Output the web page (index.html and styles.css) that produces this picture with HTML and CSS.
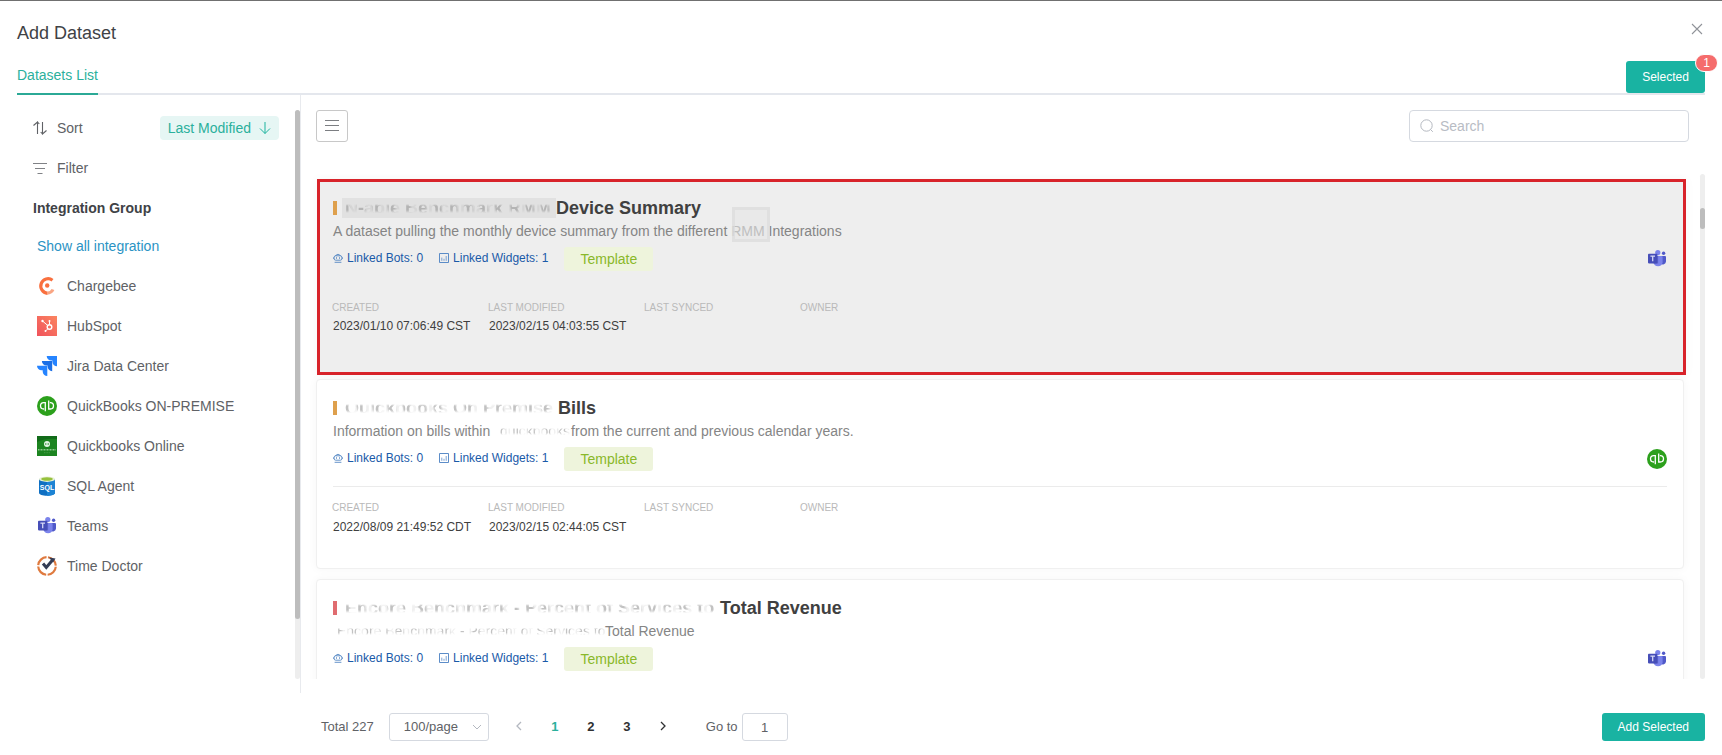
FILE: index.html
```html
<!DOCTYPE html>
<html lang="en">
<head>
<meta charset="utf-8">
<title>Add Dataset</title>
<link rel="stylesheet" href="styles.css">
</head>
<body>
<svg class="sprite" aria-hidden="true">
  <symbol id="teams" viewBox="0 0 20 20">
    <circle cx="16.6" cy="4.3" r="1.7" fill="#5059c9"/>
    <path d="M13.6 7H18a1 1 0 0 1 1 1v4.6a3.2 3.2 0 0 1-5.4 2z" fill="#5059c9"/>
    <circle cx="10.8" cy="3.6" r="2.6" fill="#7b83eb"/>
    <path d="M6.5 7h8.2a.9.9 0 0 1 .9.9v5.4a4.6 4.6 0 0 1-9.1 0z" fill="#7b83eb"/>
    <path d="M6.5 7h4.6v7.6H6.7z" fill="#4f55b5" opacity=".6"/>
    <rect x="1" y="4.8" width="9.4" height="9.6" rx=".8" fill="#464eb8"/>
    <path d="M3.4 7.2H8M5.7 7.2v5" stroke="#d5d7f5" stroke-width="1.3" fill="none"/>
  </symbol>
  <symbol id="qb" viewBox="0 0 20 20">
    <circle cx="10" cy="10" r="10" fill="#2ca01c"/>
    <path d="M8.300 6.600H6.700a3.100 3.100 0 0 0 0 6.400h.4M8.300 5.900v9.300M11.700 13h1.600a3.100 3.100 0 0 0 0-6.400h-.4M11.700 13.700V4.600" stroke="#fff" stroke-width="1.300" fill="none"/>
  </symbol>
  <symbol id="bot" viewBox="0 0 10 10">
    <path d="M2.400 2.600Q5 -.2 7.600 2.600M2.600 2.800h4.800q1.400 0 1.400 1.400v1.600q0 1.400-1.400 1.400H2.600q-1.400 0-1.400-1.400V4.200q0-1.400 1.400-1.400zM.4 4.400v1.400M9.600 4.400v1.400M1.600 9.300h6.800" fill="none" stroke="#3f78bd" stroke-width=".8"/>
    <path d="M3 5h1M6 5h1" stroke="#1a5aa8" stroke-width="1"/>
  </symbol>
  <symbol id="widget" viewBox="0 0 10 10">
    <path d="M.5.5h9v9h-9z" fill="none" stroke="#4a80c2" stroke-width=".9"/>
    <path d="M2.800 4.600v3.200M5 5.800v2M7.200 3v4.800" stroke="#6c97cd" stroke-width=".9"/>
  </symbol>
</svg>

<div class="modal">
  <header class="header">
    <h1 class="header-title">Add Dataset</h1>
    <button class="close" aria-label="Close"><svg viewBox="0 0 12 12" width="12" height="12"><path d="M1 1l10 10M11 1L1 11" stroke="#909399" stroke-width="1.1"/></svg></button>
  </header>

  <nav class="tabs">
    <a class="tab" href="#list">Datasets List</a>
    <button class="btn btn-selected">Selected<span class="badge">1</span></button>
  </nav>

  <div class="body">
    <aside class="sidebar">
      <div class="side-content">
        <div class="side-row">
          <svg viewBox="0 0 14 14" width="14" height="14"><path d="M.5 4.500L4.500 1v12M4.500 1l1.800 2M13.500 9.500L9.500 13V1M9.500 13L7.700 11" fill="none" stroke="#606266" stroke-width="1.100"/></svg>
          <span>Sort</span>
          <button class="sort-pill">Last Modified<svg viewBox="0 0 12 14" width="12" height="14"><path d="M6 1v11.500M1 7.500l5 5 5-5" fill="none" stroke="#1db39e"/></svg></button>
        </div>
        <div class="side-row">
          <svg viewBox="0 0 14 14" width="14" height="14"><path d="M0 2.500h14M2 7.500h10M4.500 12.500h5" fill="none" stroke="#808286" stroke-width="1.200"/></svg>
          <span>Filter</span>
        </div>
        <h2 class="side-heading">Integration Group</h2>
        <a class="side-link" href="#all">Show all integration</a>
        <ul class="integrations">
          <li><svg viewBox="0 0 20 20" width="20" height="20"><path d="M15.500 4.200A7.300 7.300 0 1 0 10.500 17.300" fill="none" stroke="#f9703f" stroke-width="3.200"/><path d="M10 17.200Q14.500 17 16 13.500" fill="none" stroke="#f9a583" stroke-width="3"/><circle cx="10.200" cy="9.500" r="2.200" fill="#f9703f"/></svg>Chargebee</li>
          <li><svg viewBox="0 0 20 20" width="20" height="20"><defs><linearGradient id="hs" x1="0" y1="1" x2="1" y2="0"><stop offset="0" stop-color="#f0525c"/><stop offset="1" stop-color="#fb8560"/></linearGradient></defs><path d="M0 0h20v20H0z" fill="url(#hs)"/><circle cx="12.500" cy="11" r="2.300" fill="none" stroke="#fff" stroke-width="1.400"/><path d="M5.500 5l5.300 4.500M12.500 8.500V5.500M10.800 12.800l-2 2" stroke="#fff"/><g fill="#fff"><circle cx="5.500" cy="5" r="1.200"/><circle cx="12.500" cy="5" r="1"/><circle cx="8.500" cy="15" r="1"/></g></svg>HubSpot</li>
          <li><svg viewBox="0 0 20 20" width="20" height="20"><path d="M9.700 0H20v10.300a4.600 4.600 0 0 1-4.600-4.600V4.600h-1.100A4.600 4.600 0 0 1 9.700 0z" fill="#2684ff"/><path d="M4.900 4.900h10.300v10.300a4.600 4.600 0 0 1-4.600-4.600V9.500H9.500a4.600 4.600 0 0 1-4.600-4.600z" fill="#1b6fe6"/><path d="M0 9.700h10.300V20a4.600 4.600 0 0 1-4.600-4.600v-1.100H4.600A4.600 4.600 0 0 1 0 9.700z" fill="#2684ff"/></svg>Jira Data Center</li>
          <li><svg width="20" height="20"><use href="#qb"/></svg>QuickBooks ON-PREMISE</li>
          <li><svg viewBox="0 0 20 20" width="20" height="20"><path d="M0 0h20v20H0z" fill="#1c8420"/><path d="M0 0h20v3Q9 2 0 6z" fill="#126b19"/><circle cx="10" cy="8" r="3" fill="#e3f3e3"/><path d="M8.800 7v2M11.200 7v2" stroke="#1c8420" stroke-width=".8"/><path d="M1 13.800h18" stroke="#8cc78c" stroke-width="1.600" stroke-dasharray="1 .5"/><path d="M7 16.700h6" stroke="#4ea052" stroke-width=".8" stroke-dasharray="1 .6"/></svg>Quickbooks Online</li>
          <li><svg viewBox="0 0 20 20" width="20" height="20"><path d="M2 3v14c0 1.500 3.500 2.700 8 2.700s8-1.200 8-2.700V3z" fill="#0f6fc2"/><path d="M10 3h8v14c0 1.500-3.500 2.700-8 2.700z" fill="#1c83d4"/><ellipse cx="10" cy="3.200" rx="8" ry="2.700" fill="#e9f1d5"/><ellipse cx="10" cy="3" rx="5.800" ry="1.800" fill="#96c13d"/><text class="sql-text" x="10" y="14" text-anchor="middle">SQL</text></svg>SQL Agent</li>
          <li><svg width="20" height="20"><use href="#teams"/></svg>Teams</li>
          <li><svg viewBox="0 0 20 20" width="20" height="20"><circle cx="10" cy="10" r="8.800" fill="none" stroke="#df7a3f" stroke-width="2.200" stroke-dasharray="12.320 1.500" stroke-dashoffset="-.75"/><path d="M6 7.500l3.300 4L16 3.500" fill="none" stroke="#343d55" stroke-width="3"/><path d="M12 1.500l6.500 1-2.500 4z" fill="#343d55"/></svg>Time Doctor</li>
        </ul>
      </div>
      <div class="track"><div class="thumb side-thumb"></div></div>
    </aside>

    <main class="main" id="list">
      <div class="toolbar">
        <button class="menu-btn" aria-label="Menu"><svg viewBox="0 0 14 14" width="14" height="14"><path d="M0 1.500h14M0 6.500h14M0 11.500h14" stroke="#7c7e82" stroke-width="1.200"/></svg></button>
        <label class="search">
          <svg viewBox="0 0 14 14" width="14" height="14"><circle cx="6.500" cy="6.500" r="5.700" fill="none" stroke="#b4b8c0"/><path d="M10.500 10.500l2.300 2.300" stroke="#b4b8c0"/></svg>
          <input type="search" placeholder="Search" aria-label="Search">
        </label>
      </div>

      <div class="scroller">
        <div class="list">
          <article class="card card-active">
            <h3 class="card-title"><i class="mark"></i><span class="redacted redacted-block"><span class="smudge">N-able Benchmark RMM</span></span>Device Summary</h3>
            <p class="card-desc">A dataset pulling the monthly device summary from the different <span class="patched">RMM</span> Integrations</p>
            <div class="card-links">
              <a class="link" href="#bots"><svg width="10" height="10"><use href="#bot"/></svg>Linked Bots: 0</a>
              <a class="link" href="#widgets"><svg width="10" height="10"><use href="#widget"/></svg>Linked Widgets: 1</a>
              <span class="tag">Template</span>
              <svg class="source" width="20" height="20"><use href="#teams"/></svg>
            </div>
            <dl class="meta">
              <div><dt>CREATED</dt><dd>2023/01/10 07:06:49 CST</dd></div>
              <div><dt>LAST MODIFIED</dt><dd>2023/02/15 04:03:55 CST</dd></div>
              <div><dt>LAST SYNCED</dt><dd></dd></div>
              <div><dt>OWNER</dt><dd></dd></div>
            </dl>
          </article>

          <article class="card">
            <h3 class="card-title"><i class="mark"></i><span class="redacted redacted-name"><span class="smudge">Quickbooks On Premise</span></span>Bills</h3>
            <p class="card-desc">Information on bills within <span class="redacted redacted-word"><span class="smudge">quickbooks</span></span>from the current and previous calendar years.</p>
            <div class="card-links">
              <a class="link" href="#bots"><svg width="10" height="10"><use href="#bot"/></svg>Linked Bots: 0</a>
              <a class="link" href="#widgets"><svg width="10" height="10"><use href="#widget"/></svg>Linked Widgets: 1</a>
              <span class="tag">Template</span>
              <svg class="source" width="20" height="20"><use href="#qb"/></svg>
            </div>
            <dl class="meta">
              <div><dt>CREATED</dt><dd>2022/08/09 21:49:52 CDT</dd></div>
              <div><dt>LAST MODIFIED</dt><dd>2023/02/15 02:44:05 CST</dd></div>
              <div><dt>LAST SYNCED</dt><dd></dd></div>
              <div><dt>OWNER</dt><dd></dd></div>
            </dl>
          </article>

          <article class="card">
            <h3 class="card-title"><i class="mark mark-red"></i><span class="redacted redacted-long"><span class="smudge">Encore Benchmark - Percent of Services to</span></span>Total Revenue</h3>
            <p class="card-desc"><span class="redacted redacted-line"><span class="smudge">Encore Benchmark - Percent of Services to</span></span>Total Revenue</p>
            <div class="card-links">
              <a class="link" href="#bots"><svg width="10" height="10"><use href="#bot"/></svg>Linked Bots: 0</a>
              <a class="link" href="#widgets"><svg width="10" height="10"><use href="#widget"/></svg>Linked Widgets: 1</a>
              <span class="tag">Template</span>
              <svg class="source" width="20" height="20"><use href="#teams"/></svg>
            </div>
          </article>
        </div>
        <div class="track"><div class="thumb list-thumb"></div></div>
      </div>
    </main>
  </div>

  <footer class="footer">
    <span class="total">Total 227</span>
    <span class="size">
      <select aria-label="Page size"><option>100/page</option></select>
      <svg viewBox="0 0 10 10" width="10" height="10"><path d="M1 3l4 4 4-4" fill="none" stroke="#b4b8c0"/></svg>
    </span>
    <div class="pages">
      <button aria-label="Previous"><svg viewBox="0 0 8 10" width="8" height="10"><path d="M6 1L2 5l4 4" fill="none" stroke="#b4b8c0" stroke-width="1.300"/></svg></button>
      <button class="current">1</button>
      <button>2</button>
      <button>3</button>
      <button aria-label="Next"><svg viewBox="0 0 8 10" width="8" height="10"><path d="M2 1l4 4-4 4" fill="none" stroke="#303133" stroke-width="1.300"/></svg></button>
    </div>
    <label class="goto">Go to <input type="text" value="1"></label>
    <button class="btn btn-add">Add Selected</button>
  </footer>
</div>
</body>
</html>
```
FILE: styles.css
```css
*, *::after { box-sizing: border-box; }

body {
  margin: 0;
  background: #fff;
  color: #606266;
  font: 14px/20px "Liberation Sans", Arial, sans-serif;
}

button, input, select { font: inherit; color: inherit; }
button { padding: 0; border: 0; background: none; cursor: pointer; }
a { text-decoration: none; }
h1, h2, h3, p, ul, dl, dd { margin: 0; padding: 0; }
.sprite { position: absolute; width: 0; height: 0; }
svg { flex: none; }

.modal {
  display: flex;
  flex-direction: column;
  height: 100vh;
  border-top: 1px solid #707070;
}

.header {
  display: flex;
  justify-content: space-between;
  padding: 20px 17px 0;
}
.header-title { font-size: 18px; line-height: 24px; font-weight: 400; color: #404246; }
.close { width: 16px; height: 16px; line-height: 0; }

.tabs {
  display: flex;
  justify-content: space-between;
  align-items: flex-end;
  margin: 15px 17px 0;
  height: 35px;
  box-shadow: inset 0 -2px #e4e7ed;
}
.tab {
  height: 30px;
  border-bottom: 2px solid #2ba996;
  color: #2bb09c;
}

.btn {
  border-radius: 3px;
  background: #19b3a2;
  color: #fff;
  font-size: 12px;
}
.btn-selected {
  position: relative;
  width: 79px;
  height: 32px;
  margin-bottom: 2px;
}
.badge {
  position: absolute;
  top: -7px;
  right: -13px;
  min-width: 23px;
  height: 18px;
  border: 1px solid #fff;
  border-radius: 9px;
  background: #f56c6c;
  line-height: 16px;
}

.body { display: flex; flex: 1; min-height: 0; }

.sidebar {
  display: flex;
  flex: none;
  width: 301px;
  border-right: 1px solid #e8eaee;
}
.side-content { flex: 1; padding: 13px 16px 0 33px; }
.side-row { display: flex; align-items: center; gap: 10px; height: 40px; }
.sort-pill {
  display: flex;
  align-items: center;
  gap: 8px;
  height: 24px;
  margin-left: auto;
  padding: 0 8px;
  border-radius: 4px;
  background: #e6f6f4;
  color: #2bb09c;
}
.side-heading { font-size: 14px; line-height: 40px; color: #404246; }
.side-link { display: block; padding: 0 0 2px 4px; line-height: 36px; color: #2b93c4; }
.integrations { padding-left: 4px; list-style: none; }
.integrations li { display: flex; align-items: center; gap: 10px; height: 40px; }
.sql-text { font-size: 7px; font-weight: 700; fill: #fff; }

.track { flex: none; width: 5px; border-radius: 3px; background: #eeeeee; }
.thumb { border-radius: 3px; background: #bdbdbd; }
.sidebar .track { margin: 15px 0 14px; }
.side-thumb { height: 89.500%; }
.list-thumb { height: 21px; margin-top: 34px; }

.main { display: flex; flex: 1; flex-direction: column; min-width: 0; padding: 15px 17px 14px 0; }
.toolbar { display: flex; justify-content: space-between; padding: 0 16px 0 15px; }
.menu-btn {
  width: 32px;
  height: 32px;
  border: 1px solid #c8c8c8;
  border-radius: 3px;
  line-height: 0;
}
.search {
  display: flex;
  align-items: center;
  gap: 6px;
  width: 280px;
  height: 32px;
  padding: 0 10px;
  border: 1px solid #d5d9e0;
  border-radius: 4px;
}
.search input { width: 100%; padding: 0; border: 0; outline: 0; background: none; }
.search input::placeholder { color: #b8bcc4; }

.scroller { display: flex; flex: 1; min-height: 0; margin-top: 32px; }
.list { flex: 1; min-width: 0; overflow: hidden; padding: 5px 16px 0 15px; }

.card {
  margin-bottom: 10px;
  padding: 16px 16px 33px;
  border: 1px solid #f0f0f0;
  border-radius: 4px;
  background: #fff;
  box-shadow: 0 0 10px rgba(0, 0, 0, .04);
}
.card-active {
  margin: 0 -2px 4px 1px;
  padding: 14px 16px 38px 13px;
  border: 3px solid #d8232a;
  border-radius: 0;
  background: #eeeeee;
}

.card-title {
  display: flex;
  align-items: center;
  height: 24px;
  font-size: 18px;
  line-height: 24px;
  color: #404040;
}
.mark { width: 4px; height: 14px; background: #dea04d; }
.mark-red { background: #e06c70; }
.card-desc { line-height: 22px; color: #858585; white-space: nowrap; }

.redacted { display: inline-block; color: #c2c2c2; white-space: nowrap; overflow: hidden; vertical-align: top; }
.smudge {
  -webkit-mask: repeating-linear-gradient(78deg, #000 0 5px, rgba(0, 0, 0, .25) 8px 13px, #000 15px), linear-gradient(transparent 30%, #000 40% 60%, transparent 75%);
  -webkit-mask-composite: source-in;
  mask-composite: intersect;
}
.redacted-block {
  width: 214px;
  height: 20px;
  margin-left: 5px;
  padding-left: 3px;
  background: #e1e1e1;
  color: #b4b4b4;
  line-height: 20px;
}
.redacted-name { width: 221px; padding-left: 8px; }
.redacted-word { width: 77px; padding-left: 6px; }
.redacted-long { width: 383px; padding-left: 8px; }
.redacted-line { width: 272px; padding-left: 4px; }
.patched { position: relative; color: #a8a8a8; }
.patched::after {
  content: "";
  position: absolute;
  right: -5px;
  bottom: -3px;
  width: 38px;
  height: 35px;
  border: 3px solid rgba(220, 220, 220, .7);
  background: rgba(225, 225, 225, .4);
}

.card-links { display: flex; height: 24px; margin-top: 5px; line-height: 24px; }
.link {
  display: flex;
  align-items: center;
  gap: 4px;
  height: 22px;
  margin-right: 16px;
  font-size: 12px;
  color: #1a5aa8;
}
.tag {
  padding: 0 16px;
  border-radius: 3px;
  background: #eef4dc;
  line-height: 24px;
  color: #8ab829;
}
.source { margin: 2px 0 0 auto; }

.meta {
  display: flex;
  margin-top: 15px;
  padding-top: 13px;
  border-top: 1px solid #ebebeb;
}
.card-active .meta { border-color: transparent; }
.meta div { width: 156px; }
.meta dt { margin-left: -1px; font-size: 10px; line-height: 16px; color: #b9b9b9; }
.meta dd { margin-top: 3px; font-size: 12px; line-height: 16px; color: #404040; white-space: nowrap; }
.card-active .meta dd { margin-top: 2px; }

.footer {
  display: flex;
  align-items: center;
  padding: 20px 17px 14px 321px;
  font-size: 13px;
}
.size { position: relative; margin-left: 15px; }
.size select {
  width: 100px;
  height: 28px;
  padding: 0 14px;
  border: 1px solid #d5d9e0;
  border-radius: 3px;
  background: #fff;
  appearance: none;
}
.size svg { position: absolute; top: 9px; right: 7px; pointer-events: none; }
.pages { display: flex; margin-left: 12px; }
.pages button { width: 36px; height: 28px; font-weight: 700; color: #303133; }
.pages .current { color: #2bb09c; }
.goto { display: flex; align-items: center; gap: 4px; margin-left: 25px; }
.goto input {
  width: 46px;
  height: 28px;
  padding: 0;
  border: 1px solid #d5d9e0;
  border-radius: 3px;
  text-align: center;
}
.btn-add { height: 28px; margin-left: auto; padding: 0 16px; }
```
